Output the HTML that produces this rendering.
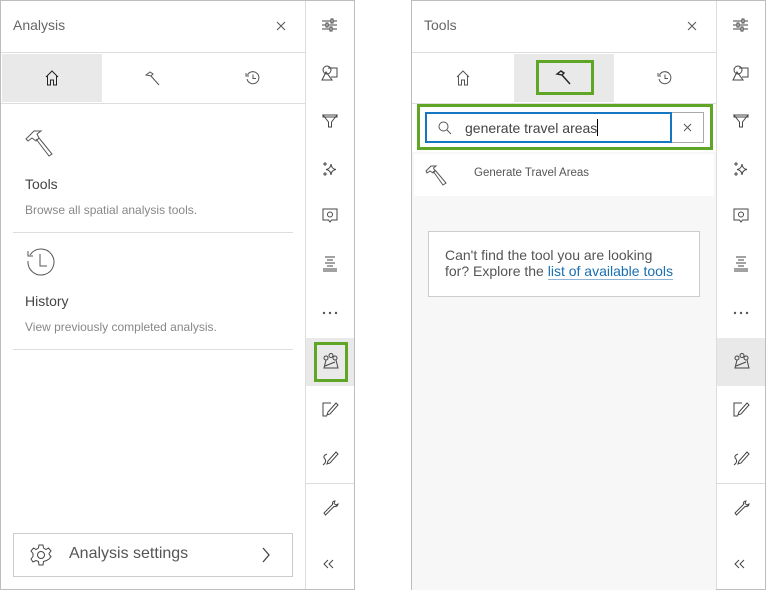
<!DOCTYPE html>
<html><head><meta charset="utf-8"><style>
*{box-sizing:border-box;margin:0;padding:0}
body{width:766px;height:590px;background:#fff;font-family:"Liberation Sans",sans-serif;position:relative;overflow:hidden;color:#4a4a4a}
.a{position:absolute}
.panel{position:absolute;top:0;height:590px;border:1px solid #bdbdbd;background:#fff}
svg{position:absolute;overflow:visible}
.ic{fill:none;stroke:#444;stroke-width:1}
</style></head><body>
<div class="panel" style="left:0;width:355px"></div>
<div class="panel" style="left:411px;width:355px"></div>

<!-- LEFT PANEL -->
<div class="a" style="left:13px;top:17px;font-size:14px;color:#666">Analysis</div>
<svg style="left:277px;top:22px" width="9" height="9" class="ic"><path d="M0 0 L8 8 M8 0 L0 8" stroke="#555"/></svg>
<div class="a" style="left:1px;top:52px;width:304px;height:1px;background:#ddd"></div>
<div class="a" style="left:2px;top:54px;width:100px;height:48px;background:#e9e9e9"></div>
<div class="a" style="left:1px;top:103px;width:304px;height:1px;background:#ddd"></div>
<svg style="left:45px;top:70px" width="14" height="16" class="ic"><path d="M1 7 L7 1 L13 7 M2.5 6 V15 H5.5 V10 H8.5 V15 H11.5 V6" stroke="#222"/></svg>
<svg style="left:145px;top:71px" width="16" height="16" class="ic"><path d="M1 4 L5 1 L8 3 L6 5 Z M6 5 L14 14" stroke="#555"/></svg>
<svg style="left:245px;top:70px" width="16" height="16" class="ic"><path d="M2.5 5 A6 6 0 1 1 2 9 M1 3 V6 H4 M8 4.5 V8.5 H11" stroke="#555"/></svg>
<svg style="left:25px;top:129px" width="32" height="30" class="ic"><path d="M1 10 L9 2 L16 2 L12 5 L14 9 L11 12 L7 9 L3 12 Z M11 10 L24 27 L27 25 L14 9" stroke="#555"/></svg>
<div class="a" style="left:25px;top:176px;font-size:14px;color:#444">Tools</div>
<div class="a" style="left:25px;top:203px;font-size:12px;color:#888">Browse all spatial analysis tools.</div>
<div class="a" style="left:13px;top:232px;width:280px;height:1px;background:#ddd"></div>
<svg style="left:26px;top:247px" width="30" height="30" class="ic"><path d="M4 8 A13 13 0 1 1 2 14 M2 4 V9 H7 M14 7 V19 H21" stroke="#555"/></svg>
<div class="a" style="left:25px;top:293px;font-size:14px;color:#444">History</div>
<div class="a" style="left:25px;top:320px;font-size:12px;color:#888">View previously completed analysis.</div>
<div class="a" style="left:13px;top:349px;width:280px;height:1px;background:#ddd"></div>
<div class="a" style="left:13px;top:533px;width:280px;height:44px;border:1px solid #ccc"></div>
<svg style="left:30px;top:544px" width="22" height="22" class="ic"><circle cx="11" cy="11" r="3.5" stroke="#444"/><path d="M9 1 H13 L13.5 4 L16 5.5 L18.5 4 L21 7 L19 9.5 L19.5 11 L21 12.5 L19 15 L16.5 16.5 L13.5 17.5 L13 21 H9 L8.5 17.5 L6 16.5 L3 18 L1 15 L3 12.5 V9.5 L1 7 L3.5 4 L6 5.5 L8.5 4 Z" stroke="#444"/></svg>
<div class="a" style="left:69px;top:545px;font-size:16px;color:#555">Analysis settings</div>
<svg style="left:261px;top:547px" width="10" height="16" class="ic"><path d="M2 1 L8 8 L2 15" stroke="#444" stroke-width="1.3"/></svg>

<!-- RIGHT PANEL -->
<div class="a" style="left:424px;top:17px;font-size:14px;color:#666">Tools</div>
<svg style="left:688px;top:22px" width="9" height="9" class="ic"><path d="M0 0 L8 8 M8 0 L0 8" stroke="#555"/></svg>
<div class="a" style="left:412px;top:52px;width:304px;height:1px;background:#ddd"></div>
<div class="a" style="left:514px;top:54px;width:100px;height:48px;background:#e9e9e9"></div>
<div class="a" style="left:536px;top:60px;width:58px;height:35px;border:3px solid #5fa526"></div>
<div class="a" style="left:412px;top:103px;width:304px;height:1px;background:#ddd"></div>
<svg style="left:456px;top:70px" width="14" height="16" class="ic"><path d="M1 7 L7 1 L13 7 M2.5 6 V15 H5.5 V10 H8.5 V15 H11.5 V6" stroke="#555"/></svg>
<svg style="left:556px;top:70px" width="16" height="16" class="ic"><path d="M1 4 L5 1 L8 3 L6 5 Z M6 5 L14 14" stroke="#222" stroke-width="1.4"/></svg>
<svg style="left:657px;top:70px" width="16" height="16" class="ic"><path d="M2.5 5 A6 6 0 1 1 2 9 M1 3 V6 H4 M8 4.5 V8.5 H11" stroke="#555"/></svg>
<div class="a" style="left:412px;top:104px;width:304px;height:486px;background:#f7f7f7"></div>
<div class="a" style="left:412px;top:104px;width:304px;height:48px;background:#fff"></div>
<div class="a" style="left:417px;top:104px;width:296px;height:46px;border:3px solid #5fa526"></div>
<div class="a" style="left:425px;top:112px;width:279px;height:31px;border:1px solid #aaa;background:#fff"></div>
<div class="a" style="left:425px;top:112px;width:247px;height:31px;border:2px solid #1577c2"></div>
<svg style="left:438px;top:121px" width="14" height="14" class="ic"><circle cx="5.5" cy="5.5" r="4.5" stroke="#555"/><path d="M9 9 L13 13" stroke="#555"/></svg>
<div class="a" style="left:465px;top:119px;font-size:14px;color:#444">generate travel areas<span style="display:inline-block;width:1px;height:17px;background:#000;vertical-align:-3px"></span></div>
<svg style="left:684px;top:124px" width="8" height="8" class="ic"><path d="M0 0 L7 7 M7 0 L0 7" stroke="#555"/></svg>
<div class="a" style="left:414px;top:154px;width:300px;height:42px;background:#fff"></div>
<svg style="left:425px;top:164px" width="25" height="23" class="ic"><path d="M1 7 L6 2 L11 2 L8.5 4 L10 7 L8 9 L5 7 L2 9 Z M8 7 L18 21 L21 19 L10 6" stroke="#555"/></svg>
<div class="a" style="left:474px;top:167px;font-size:11.5px;color:#555">Generate Travel Areas</div>
<div class="a" style="left:428px;top:231px;width:272px;height:66px;border:1px solid #ccc;background:#fff"></div>
<div class="a" style="left:445px;top:247px;font-size:14px;line-height:16px;color:#555;white-space:nowrap">Can't find the tool you are looking<br>for? Explore the <span style="color:#1a6fb0;border-bottom:1px solid #8fb4d4">list of available tools</span></div>

<!-- SIDEBARS -->
<div class="a" style="left:305px;top:1px;width:1px;height:588px;background:#ddd"></div>
<div class="a" style="left:716px;top:1px;width:1px;height:588px;background:#ddd"></div>
<div class="a" style="left:306px;top:338px;width:48px;height:48px;background:#e9e9e9"></div>
<div class="a" style="left:717px;top:338px;width:48px;height:48px;background:#e9e9e9"></div>
<div class="a" style="left:314px;top:342px;width:34px;height:40px;border:3px solid #5fa526"></div>
<div class="a" style="left:306px;top:483px;width:48px;height:1px;background:#ddd"></div>
<div class="a" style="left:717px;top:483px;width:48px;height:1px;background:#ddd"></div>

<svg width="0" height="0" style="position:absolute"><defs>
<g id="i1" class="ic" stroke="#555"><path d="M0 4 H15 M0 8 H15 M0 12 H15"/><rect x="9" y="2" width="2" height="4" fill="#fff"/><rect x="4" y="6" width="2" height="4" fill="#fff"/><rect x="8" y="10" width="2" height="4" fill="#fff"/></g>
<g id="i2" class="ic" stroke="#555"><circle cx="5" cy="5" r="4"/><path d="M6 3 H15 V12 H9 M4 7 L0 15 H10 Z"/></g>
<g id="i3" class="ic" stroke="#555"><path d="M1 2 H15 L9.5 9 V14 H6.5 V9 Z M1 2 H15 V4 H1Z"/></g>
<g id="i4" class="ic" stroke="#555"><path d="M9 3 Q9.5 8 14 8.5 Q9.5 9 9 14 Q8.5 9 4 8.5 Q8.5 8 9 3Z M3 1 V5 M1 3 H5 M3 11 V15 M1 13 H5"/></g>
<g id="i5" class="ic" stroke="#555"><path d="M1 1 H15 V12 H9.5 L8 14 L6.5 12 H1Z"/><circle cx="8" cy="6.5" r="2.5"/></g>
<g id="i6" class="ic" stroke="#555"><path d="M3 1 H13 M5 4 H11 M3 7 H13 M5 10 H11 M1 13 H15 M1 15 H15"/></g>
<g id="i7" fill="#555"><circle cx="2" cy="8" r="1.2"/><circle cx="8" cy="8" r="1.2"/><circle cx="14" cy="8" r="1.2"/></g>
<g id="i8" class="ic" stroke="#222"><circle cx="4" cy="5" r="2"/><circle cx="9" cy="2.5" r="2"/><circle cx="13" cy="5" r="2"/><path d="M4 7 L2 15 H16 L14 7 M3 13 L13 9"/></g>
<g id="i9" class="ic" stroke="#555"><path d="M9 2 H1 V15 H5 M14 2 L16 4 L8 13 L5 14 L6 11 Z"/></g>
<g id="i10" class="ic" stroke="#555"><path d="M14 1 L16 3 L8 12 L5 13 L6 10 Z M5 3 Q0 5 3 8 Q5 11 1 14"/></g>
<g id="i11" class="ic" stroke="#555"><path d="M13 1 Q10 1 10.5 4.5 L2 13 L3.5 15 L12 6.5 Q15.5 7 16 4 L14 5 L12 3.5 Z"/></g>
<g id="i12" class="ic" stroke="#555"><path d="M6 4 L2 8 L6 12 M11 4 L7 8 L11 12"/></g>
</defs></svg>

<svg style="left:322px;top:17px" width="16" height="16"><use href="#i1"/></svg>
<svg style="left:322px;top:65px" width="16" height="16"><use href="#i2"/></svg>
<svg style="left:322px;top:113px" width="16" height="16"><use href="#i3"/></svg>
<svg style="left:322px;top:161px" width="16" height="16"><use href="#i4"/></svg>
<svg style="left:322px;top:208px" width="16" height="16"><use href="#i5"/></svg>
<svg style="left:322px;top:256px" width="16" height="16"><use href="#i6"/></svg>
<svg style="left:322px;top:305px" width="16" height="16"><use href="#i7"/></svg>
<svg style="left:322px;top:353px" width="16" height="16"><use href="#i8"/></svg>
<svg style="left:322px;top:401px" width="16" height="16"><use href="#i9"/></svg>
<svg style="left:322px;top:451px" width="16" height="16"><use href="#i10"/></svg>
<svg style="left:322px;top:500px" width="16" height="16"><use href="#i11"/></svg>
<svg style="left:322px;top:556px" width="16" height="16"><use href="#i12"/></svg>

<svg style="left:733px;top:17px" width="16" height="16"><use href="#i1"/></svg>
<svg style="left:733px;top:65px" width="16" height="16"><use href="#i2"/></svg>
<svg style="left:733px;top:113px" width="16" height="16"><use href="#i3"/></svg>
<svg style="left:733px;top:161px" width="16" height="16"><use href="#i4"/></svg>
<svg style="left:733px;top:208px" width="16" height="16"><use href="#i5"/></svg>
<svg style="left:733px;top:256px" width="16" height="16"><use href="#i6"/></svg>
<svg style="left:733px;top:305px" width="16" height="16"><use href="#i7"/></svg>
<svg style="left:733px;top:353px" width="16" height="16"><use href="#i8"/></svg>
<svg style="left:733px;top:401px" width="16" height="16"><use href="#i9"/></svg>
<svg style="left:733px;top:451px" width="16" height="16"><use href="#i10"/></svg>
<svg style="left:733px;top:500px" width="16" height="16"><use href="#i11"/></svg>
<svg style="left:733px;top:556px" width="16" height="16"><use href="#i12"/></svg>
</body></html>
